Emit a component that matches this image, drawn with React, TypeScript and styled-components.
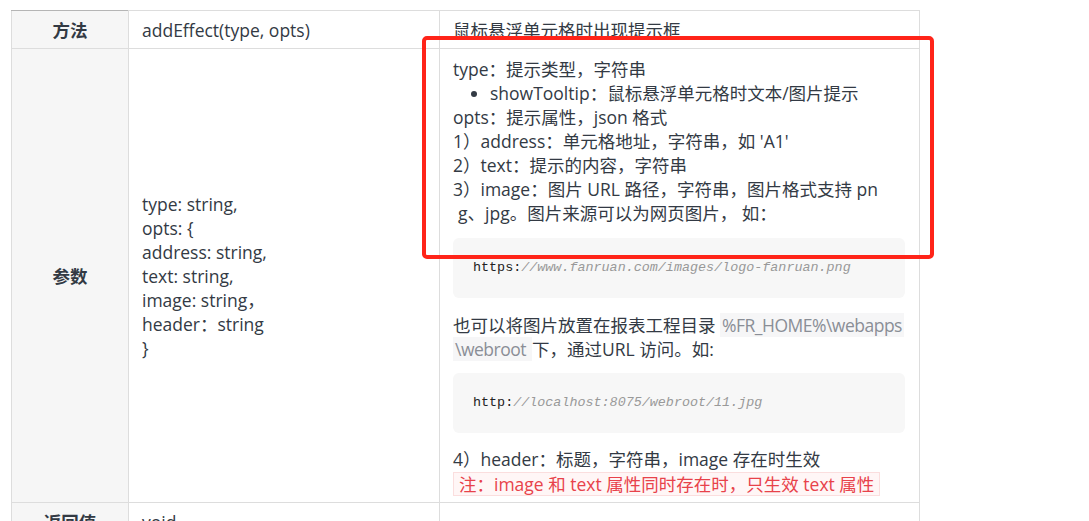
import React from 'react';
import styled, { createGlobalStyle } from 'styled-components';

const textColor = '#333a44';
const borderColor = '#dddddd';

const GlobalStyle = createGlobalStyle`
  html, body {
    margin: 0;
    padding: 0;
    background: #ffffff;
  }
  body {
    font-family: 'Open Sans', 'Noto Sans CJK SC', sans-serif;
    color: ${textColor};
  }
`;

const Page = styled.div`
  position: relative;
  padding: 10px 0 0 11px;
  height: 521px;
  box-sizing: border-box;
  overflow: hidden;
`;

const Table = styled.table`
  border-collapse: collapse;
  width: 908px;
  table-layout: fixed;
  font-size: 17.5px;
  line-height: 24px;
`;

const HeadCell = styled.th<{ tall?: boolean }>`
  width: 117px;
  background: #f6f6f6;
  border: 1px solid ${borderColor};
  font-weight: bold;
  text-align: center;
  vertical-align: middle;
  padding: ${props => (props.tall ? '0' : '7px 0 6px')};
`;

const TopHeadCell = styled(HeadCell)`
  border-top: 1px solid #b5b5b5;
`;

const Cell = styled.td<{ wide?: boolean }>`
  width: ${props => (props.wide ? '480px' : '311px')};
  border: 1px solid ${borderColor};
  padding: 7px 14px 6px 13px;
  vertical-align: middle;
  box-sizing: border-box;
`;

const DescCell = styled(Cell)`
  padding: 8px 14px 6px 13px;
  vertical-align: top;
`;

const Line = styled.div`
  white-space: nowrap;
`;

const WrapLine = styled(Line)`
  padding-left: 5px;
`;

const Bullets = styled.ul`
  margin: 0;
  padding-left: 37px;
  list-style: disc;
`;

const CodeBlock = styled.pre<{ gap?: 'first' | 'second' }>`
  margin: ${props => (props.gap === 'second' ? '12px 0 14px' : '13px 0 15px')};
  height: 60px;
  box-sizing: border-box;
  padding: 0 20px;
  display: flex;
  align-items: center;
  background: #f7f7f7;
  border-radius: 6px;
  font-family: 'Liberation Mono', 'DejaVu Sans Mono', monospace;
  font-size: 13.4px;
  color: #222;
`;

const Comment = styled.span`
  color: #999;
  font-style: italic;
`;

const InlineCode = styled.span`
  color: #8a8e96;
  background: #f6f6f7;
  padding: 0 2px;
  letter-spacing: -0.5px;
`;

const Note = styled.span`
  display: inline-block;
  margin-top: 1px;
  padding: 0 5px;
  line-height: 22px;
  color: #e8424a;
  background: #fff6f6;
  border: 1px solid #fbdede;
`;

const Highlight = styled.div`
  position: absolute;
  left: 422px;
  top: 36px;
  width: 512px;
  height: 223px;
  box-sizing: border-box;
  border: 4px solid #ff2419;
  border-radius: 5px;
  pointer-events: none;
`;

export default function App() {
  return (
    <>
      <GlobalStyle />
      <Page>
        <Table>
          <colgroup>
            <col style={{ width: 117 }} />
            <col style={{ width: 311 }} />
            <col style={{ width: 480 }} />
          </colgroup>
          <tbody>
            <tr>
              <TopHeadCell>方法</TopHeadCell>
              <Cell>addEffect(type, opts)</Cell>
              <Cell wide>鼠标悬浮单元格时出现提示框</Cell>
            </tr>
            <tr>
              <HeadCell tall>参数</HeadCell>
              <Cell>
                <Line>type: string,</Line>
                <Line>opts: {'{'}</Line>
                <Line>address: string,</Line>
                <Line>text: string,</Line>
                <Line>image: string，</Line>
                <Line>header：string</Line>
                <Line>{'}'}</Line>
              </Cell>
              <DescCell wide>
                <Line>type：提示类型，字符串</Line>
                <Bullets>
                  <li>showTooltip：鼠标悬浮单元格时文本/图片提示</li>
                </Bullets>
                <Line>opts：提示属性，json 格式</Line>
                <Line>1）address：单元格地址，字符串，如 'A1'</Line>
                <Line>2）text：提示的内容，字符串</Line>
                <Line>3）image：图片 URL 路径，字符串，图片格式支持 pn</Line>
                <WrapLine>g、jpg。图片来源可以为网页图片， 如：</WrapLine>
                <CodeBlock gap="first">
                  https:<Comment>//www.fanruan.com/images/logo-fanruan.png</Comment>
                </CodeBlock>
                <Line>
                  也可以将图片放置在报表工程目录 <InlineCode>%FR_HOME%\webapps</InlineCode>
                </Line>
                <Line>
                  <InlineCode>\webroot </InlineCode>下，通过URL 访问。如:
                </Line>
                <CodeBlock gap="second">
                  http:<Comment>//localhost:8075/webroot/11.jpg</Comment>
                </CodeBlock>
                <Line>4）header：标题，字符串，image 存在时生效</Line>
                <Note>注：image 和 text 属性同时存在时，只生效 text 属性</Note>
              </DescCell>
            </tr>
            <tr>
              <HeadCell>返回值</HeadCell>
              <Cell>void</Cell>
              <Cell wide></Cell>
            </tr>
          </tbody>
        </Table>
        <Highlight />
      </Page>
    </>
  );
}
